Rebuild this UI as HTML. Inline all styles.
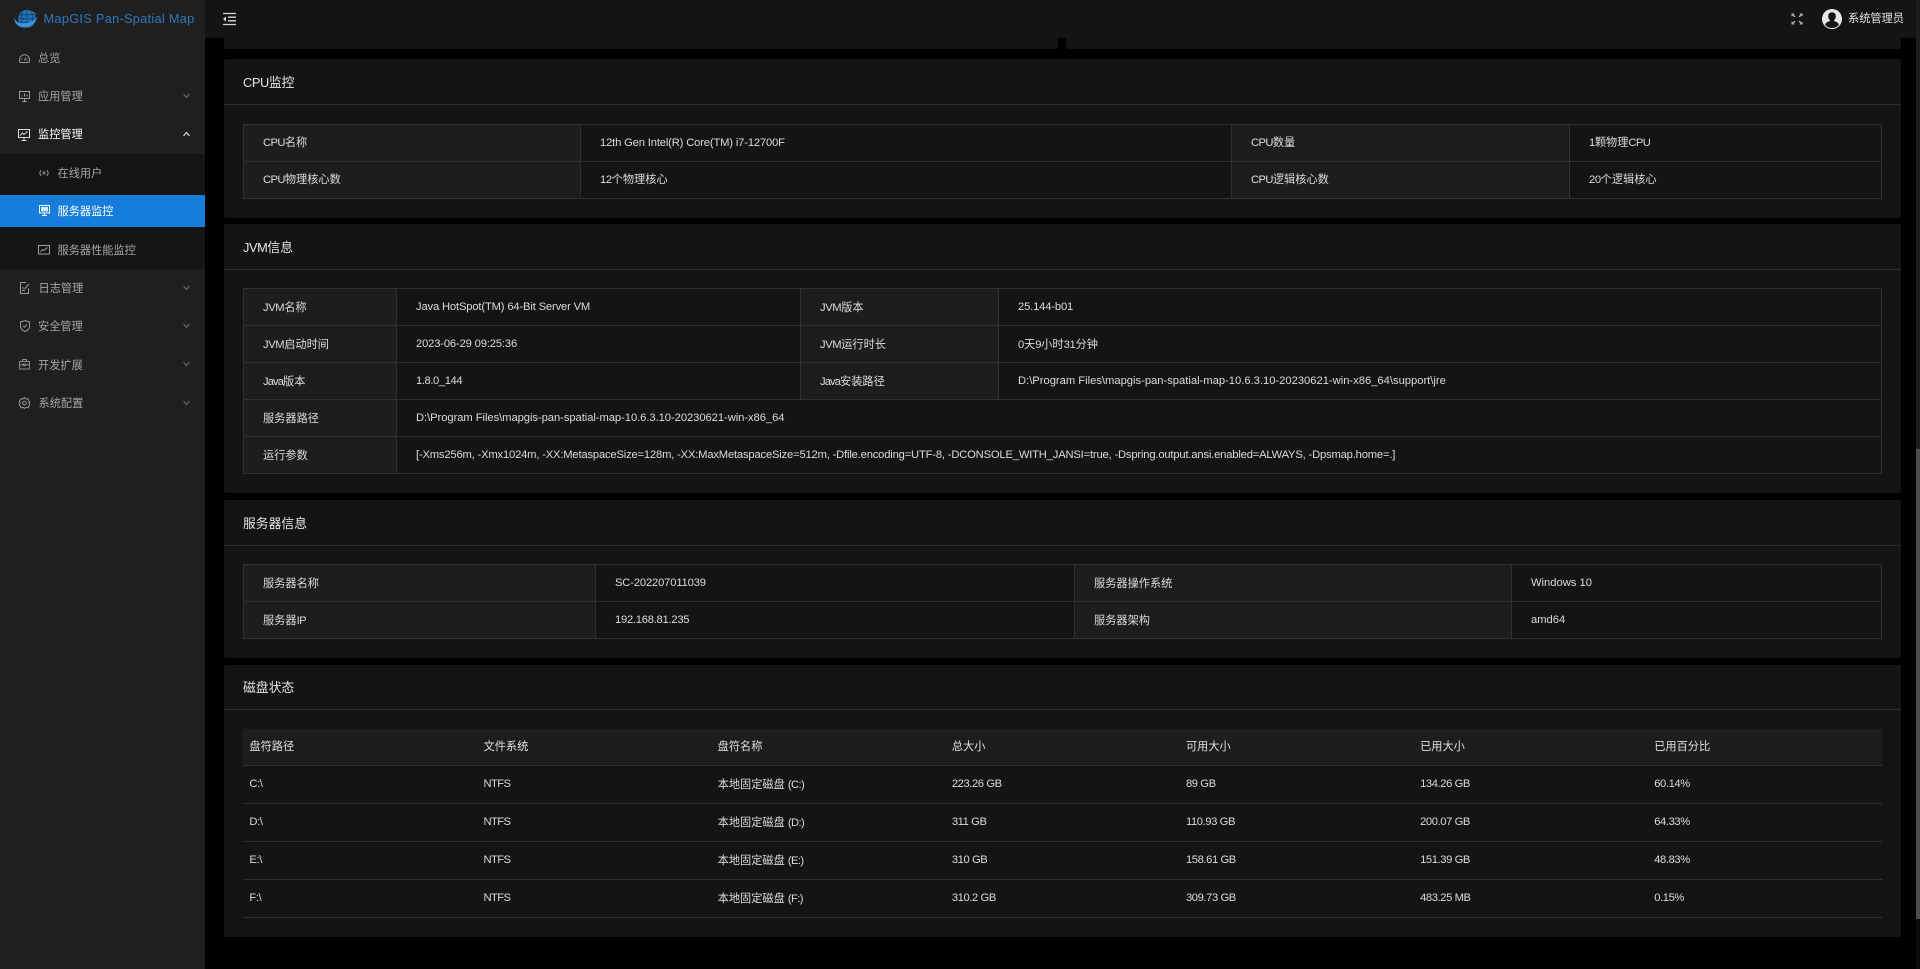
<!DOCTYPE html>
<html lang="zh-CN">
<head>
<meta charset="utf-8">
<title>MapGIS Pan-Spatial Map</title>
<style>
*{box-sizing:border-box}
html,body{margin:0;padding:0;width:1920px;height:969px;overflow:hidden;background:#000}
body{position:relative;font-family:"Liberation Sans","Noto Sans CJK SC",sans-serif;font-size:11.2px;color:#dcdcdc}
.side{position:absolute;left:0;top:0;width:205px;height:969px;background:#1f1f1f}
.sub{position:absolute;left:0;top:154px;width:205px;height:115px;background:#151515}
.act{position:absolute;left:0;top:195px;width:205px;height:32px;background:#177ddc}
.logo{position:absolute;left:43.500px;top:10px;font-size:12.8px;line-height:18px;color:#2f79bd;white-space:nowrap;letter-spacing:.27px}
.m{position:absolute;line-height:16px;white-space:nowrap;color:#a6a6a6;margin-top:1px}
.m.w{color:#fff}
.ic{position:absolute;display:block;overflow:visible}
.side .ic{margin-top:1px}
.side .ic.c,.side .ic.lg{margin-top:0}
.hd{position:absolute;left:205px;top:0;width:1711px;height:38px;background:#141414}
.user{position:absolute;left:1848px;top:11px;line-height:16px;color:#e4e4e4;white-space:nowrap}
.track{position:absolute;left:1916px;top:0;width:4px;height:969px;background:#0b0b0b}
.track i{position:absolute;left:0;top:0;width:4px;height:449px;background:#1c1c1c}
.track b{position:absolute;left:0;top:449px;width:4px;height:470px;background:#4d4d4d}
.card{position:absolute;left:224px;width:1677px;background:#141414;border-radius:2px}
.h{position:absolute;left:0;top:0;width:100%;border-bottom:1px solid #303030;padding-left:19px;font-size:12.8px;font-weight:400;color:#e6e6e6;margin:0;display:flex;align-items:center}
table{position:absolute;left:19px;border-collapse:collapse;table-layout:fixed;font-size:11.2px}
.d td,.d th{height:37px;border:1px solid #303030;padding:0 0 0 19px;font-weight:400;text-align:left;white-space:nowrap;color:#dcdcdc}
.d th{background:#1d1d1d}
.d .u{padding-bottom:2px}
.g th{height:36px;background:#1d1d1d;font-weight:400;text-align:left;padding:0 0 2px 6.4px;border-bottom:1px solid #303030;color:#e0e0e0}
.g td{height:38px;padding:0 0 0 6.4px;border-bottom:1px solid #303030;white-space:nowrap;color:#dcdcdc}
.a{letter-spacing:-.05px}.b{letter-spacing:-.15px}.e{letter-spacing:-.25px}.f{letter-spacing:-.4px}.j{letter-spacing:-.6px}.k{letter-spacing:-.9px}
</style>
</head>
<body>

<div class="card" style="top:38px;height:11px;width:834px"></div>
<div class="card" style="top:38px;height:11px;left:1066px;width:835px"></div>

<div class="card" style="top:59px;height:159px">
  <h3 class="h" style="height:46px"><span><span class="f">CPU</span>监控</span></h3>
  <table class="d" style="top:65px;width:1638px">
    <colgroup><col style="width:337px"><col style="width:651px"><col style="width:338px"><col style="width:312px"></colgroup>
    <tr><th class="u"><span class="j">CPU</span>名称</th><td class="b">12th Gen Intel(R) Core(TM) i7-12700F</td><th class="u"><span class="j">CPU</span>数量</th><td class="u"><span class="f">1</span>颗物理<span class="j">CPU</span></td></tr>
    <tr><th class="u"><span class="j">CPU</span>物理核心数</th><td class="u"><span class="f">12</span>个物理核心</td><th class="u"><span class="j">CPU</span>逻辑核心数</th><td class="u"><span class="f">20</span>个逻辑核心</td></tr>
  </table>
</div>

<div class="card" style="top:224px;height:269px">
  <h3 class="h" style="height:46px"><span><span class="f">JVM</span>信息</span></h3>
  <table class="d" style="top:64px;width:1638px">
    <colgroup><col style="width:153px"><col style="width:404px"><col style="width:198px"><col style="width:883px"></colgroup>
    <tr><th><span class="f">JVM</span>名称</th><td class="b">Java HotSpot(TM) 64-Bit Server VM</td><th><span class="f">JVM</span>版本</th><td class="b">25.144-b01</td></tr>
    <tr><th><span class="f">JVM</span>启动时间</th><td class="b">2023-06-29 09:25:36</td><th><span class="f">JVM</span>运行时长</th><td><span class="e">0</span>天<span class="e">9</span>小时<span class="e">31</span>分钟</td></tr>
    <tr><th><span class="k">Java</span>版本</th><td class="f">1.8.0_144</td><th><span class="k">Java</span>安装路径</th><td>D:\Program Files\mapgis-pan-spatial-map-10.6.3.10-20230621-win-x86_64\support\jre</td></tr>
    <tr><th>服务器路径</th><td colspan="3" class="a">D:\Program Files\mapgis-pan-spatial-map-10.6.3.10-20230621-win-x86_64</td></tr>
    <tr><th>运行参数</th><td colspan="3" style="letter-spacing:-.17px">[-Xms256m, -Xmx1024m, -XX:MetaspaceSize=128m, -XX:MaxMetaspaceSize=512m, -Dfile.encoding=UTF-8, -DCONSOLE_WITH_JANSI=true, -Dspring.output.ansi.enabled=ALWAYS, -Dpsmap.home=.]</td></tr>
  </table>
</div>

<div class="card" style="top:500px;height:158px">
  <h3 class="h" style="height:46px">服务器信息</h3>
  <table class="d" style="top:64px;width:1638px">
    <colgroup><col style="width:352px"><col style="width:479px"><col style="width:437px"><col style="width:370px"></colgroup>
    <tr><th>服务器名称</th><td class="b">SC-202207011039</td><th>服务器操作系统</th><td>Windows 10</td></tr>
    <tr><th>服务器<span class="j">IP</span></th><td class="e">192.168.81.235</td><th>服务器架构</th><td>amd64</td></tr>
  </table>
</div>

<div class="card" style="top:665px;height:272px">
  <h3 class="h" style="height:45px;padding-bottom:2px">磁盘状态</h3>
  <table class="g" style="top:64px;width:1639px">
    <colgroup><col span="7" style="width:234.14px"></colgroup>
    <tr><th>盘符路径</th><th>文件系统</th><th>盘符名称</th><th>总大小</th><th>可用大小</th><th>已用大小</th><th>已用百分比</th></tr>
    <tr><td class="f">C:\</td><td class="j">NTFS</td><td>本地固定磁盘 <span class="j">(C:)</span></td><td class="f">223.26 GB</td><td class="f">89 GB</td><td class="f">134.26 GB</td><td class="f">60.14%</td></tr>
    <tr><td class="f">D:\</td><td class="j">NTFS</td><td>本地固定磁盘 <span class="j">(D:)</span></td><td class="f">311 GB</td><td class="f">110.93 GB</td><td class="f">200.07 GB</td><td class="f">64.33%</td></tr>
    <tr><td class="f">E:\</td><td class="j">NTFS</td><td>本地固定磁盘 <span class="j">(E:)</span></td><td class="f">310 GB</td><td class="f">158.61 GB</td><td class="f">151.39 GB</td><td class="f">48.83%</td></tr>
    <tr><td class="f">F:\</td><td class="j">NTFS</td><td>本地固定磁盘 <span class="j">(F:)</span></td><td class="f">310.2 GB</td><td class="f">309.73 GB</td><td class="f">483.25 MB</td><td class="f">0.15%</td></tr>
  </table>
</div>

<div class="hd"></div>
<svg class="ic" style="left:222px;top:12px" width="15" height="14" viewBox="0 0 15 14">
  <path d="M1 1.5h13M6 5.2h8M6 8.8h8M1 12.5h13" stroke="#d8d8d8" stroke-width="1.3" fill="none"/>
  <path d="M4 4.5v5L1 7z" fill="#d8d8d8"/>
</svg>
<svg class="ic" style="left:1791px;top:13px" width="12" height="12" viewBox="0 0 12 12">
  <path d="M0.5 0.5h3L2.6 1.6 4.4 3.4 3.4 4.4 1.6 2.6 0.5 3.5zM11.5 0.5v3L10.4 2.6 8.6 4.4 7.6 3.4 9.4 1.6 8.5 0.5zM0.5 11.5v-3L1.6 9.4 3.4 7.6 4.4 8.6 2.6 10.4 3.5 11.5zM11.5 11.5h-3L9.4 10.4 7.6 8.6 8.6 7.6 10.4 9.4 11.5 8.5z" fill="#b4b4b4"/>
</svg>
<svg class="ic" style="left:1822px;top:9px" width="20" height="20" viewBox="0 0 20 20">
  <circle cx="10" cy="10" r="10" fill="#e6e6e6"/>
  <path d="M10 3.2c-2.4 0-3.8 1.8-3.8 4 0 1.6.7 3 1.7 3.8v1.1c-1.900.6-4.300 1.300-4.700 3.700C4.700 18 7.200 19 10 19s5.300-1 6.800-3.200c-.4-2.400-2.800-3.100-4.700-3.700V11c1-.8 1.700-2.200 1.700-3.800 0-2.200-1.400-4-3.800-4z" fill="#141414"/>
</svg>
<div class="user">系统管理员</div>

<div class="track"><i></i><b></b></div>

<aside class="side">
  <svg class="ic lg" style="left:14px;top:9px" width="25" height="21" viewBox="0 0 25 21">
    <circle cx="13" cy="9.800" r="8.800" fill="#2273ba"/>
    <path d="M5 9.800h16M13 1.200v17M8.500 3c-1.500 4.500-1.500 9 0 13.500M17.500 3c1.500 4.500 1.500 9 0 13.500M6 5.800h14M6 13.500h14" stroke="#123f69" stroke-width=".8" fill="none"/>
    <path d="M6.500 2.500C2.500 5 .5 8 1 10c.8 3 5.500 5 11.500 4 5.500-1 9-3.500 11.500-6.500-2.500 6-7 10.500-12.500 11C5.500 19 .8 15 .5 11 .3 7.500 3 4.500 6.500 2.500z" fill="#3d94dc"/>
    <path d="M17 2c3 .8 5 2.500 6 4.500-1-1-3-2.500-6-4.500z" fill="#3d94dc"/>
  </svg>
  <div class="logo">MapGIS Pan-Spatial Map</div>

  <div class="sub"></div>
  <div class="act"></div>

  <!-- 总览 -->
  <svg class="ic" style="left:19px;top:52px" width="11" height="11" viewBox="0 0 11 11" fill="none" stroke="#a0a0a0" stroke-width="1">
    <path d="M1 9.500C.3 8.500.2 7.500.5 6.300 1 3.500 3 1.800 5.500 1.800s4.500 1.700 5 4.500c.3 1.200.2 2.200-.5 3.200z"/><path d="M5.500 7.500 7 4.500M2.300 6h1M7.700 7h1" />
  </svg>
  <div class="m" style="left:38px;top:50px">总览</div>

  <!-- 应用管理 -->
  <svg class="ic" style="left:19px;top:90px" width="11" height="11" viewBox="0 0 11 11" fill="none" stroke="#a0a0a0" stroke-width="1">
    <rect x=".5" y=".5" width="10" height="7"/><path d="M3 10.500h5M5.500 7.500v3M3 5.500v-1M5.500 5.500v-3M8 5.500v-2"/>
  </svg>
  <div class="m" style="left:38px;top:88px">应用管理</div>
  <svg class="ic c" style="left:183px;top:93px" width="7" height="6" viewBox="0 0 7 6"><path d="M.5 1 3.500 4.500 6.500 1" fill="none" stroke="#666" stroke-width="1.200"/></svg>

  <!-- 监控管理 -->
  <svg class="ic" style="left:18px;top:128px" width="12" height="12" viewBox="0 0 12 12" fill="none" stroke="#dcdcdc" stroke-width="1">
    <rect x=".5" y=".5" width="11" height="8"/><path d="M2 6.500 4.500 4l1.500 1.500L9.500 2.500M3.500 11.500h5M6 8.500v3"/>
  </svg>
  <div class="m w" style="left:38px;top:126px">监控管理</div>
  <svg class="ic c" style="left:183px;top:131px" width="7" height="6" viewBox="0 0 7 6"><path d="M.5 5 3.500 1.500 6.500 5" fill="none" stroke="#e0e0e0" stroke-width="1.200"/></svg>

  <!-- 在线用户 -->
  <svg class="ic" style="left:39px;top:168px" width="10" height="8" viewBox="0 0 10 8" fill="none" stroke="#8c8c8c" stroke-width="1">
    <path d="M2 1 .7 4 2 7M8 1l1.300 3L8 7"/><path d="M3.700 2.500 6.300 5.500M6.300 2.500 3.700 5.500"/>
  </svg>
  <div class="m" style="left:57.500px;top:165px">在线用户</div>

  <!-- 服务器监控 -->
  <svg class="ic" style="left:38.500px;top:204px" width="11" height="11" viewBox="0 0 11 11">
    <rect x=".5" y=".5" width="10" height="7.500" fill="none" stroke="#fff"/><rect x="2" y="2" width="7" height="4.500" fill="#d5e8f8"/><path d="M3 10.500h5M5.500 8v2.500" stroke="#fff" fill="none"/>
  </svg>
  <div class="m w" style="left:57.500px;top:203px">服务器监控</div>

  <!-- 服务器性能监控 -->
  <svg class="ic" style="left:38px;top:244px" width="12" height="10" viewBox="0 0 12 10" fill="none" stroke="#a0a0a0" stroke-width="1">
    <rect x=".5" y=".5" width="11" height="8.500"/><path d="M2.500 7 4.500 4.500 6 5.500 9.500 2.500"/>
  </svg>
  <div class="m" style="left:57.500px;top:241.500px">服务器性能监控</div>

  <!-- 日志管理 -->
  <svg class="ic" style="left:20px;top:281px" width="10" height="12" viewBox="0 0 10 12" fill="none" stroke="#9a9a9a" stroke-width="1">
    <path d="M8.500 6.500v5h-8V.5h5.500M2 8.500h3M2 6h2"/><path d="M4.500 7 9 1.800"/>
  </svg>
  <div class="m" style="left:38.500px;top:280px">日志管理</div>
  <svg class="ic c" style="left:183px;top:285px" width="7" height="6" viewBox="0 0 7 6"><path d="M.5 1 3.500 4.500 6.500 1" fill="none" stroke="#666" stroke-width="1.200"/></svg>

  <!-- 安全管理 -->
  <svg class="ic" style="left:20px;top:319px" width="10" height="12" viewBox="0 0 10 12" fill="none" stroke="#9a9a9a" stroke-width="1">
    <path d="M5 .6 9.500 2v4.500c0 2.500-2 4-4.500 5-2.500-1-4.500-2.500-4.500-5V2z"/><path d="M3 5.800 4.500 7.200 7 4.500"/>
  </svg>
  <div class="m" style="left:38px;top:318px">安全管理</div>
  <svg class="ic c" style="left:183px;top:323px" width="7" height="6" viewBox="0 0 7 6"><path d="M.5 1 3.500 4.500 6.500 1" fill="none" stroke="#666" stroke-width="1.200"/></svg>

  <!-- 开发扩展 -->
  <svg class="ic" style="left:19px;top:358px" width="11" height="11" viewBox="0 0 11 11" fill="none" stroke="#8c8c8c" stroke-width="1">
    <rect x=".5" y="2.500" width="10" height="7.500"/><path d="M3.500 2.500v-2h4v2M.5 5.800h3.500M7 5.800h3.500"/><rect x="4.300" y="5" width="2.400" height="1.600"/>
  </svg>
  <div class="m" style="left:38px;top:356.500px">开发扩展</div>
  <svg class="ic c" style="left:183px;top:361px" width="7" height="6" viewBox="0 0 7 6"><path d="M.5 1 3.500 4.500 6.500 1" fill="none" stroke="#666" stroke-width="1.200"/></svg>

  <!-- 系统配置 -->
  <svg class="ic" style="left:19px;top:396px" width="11" height="12" viewBox="0 0 11 12" fill="none" stroke="#9a9a9a" stroke-width="1">
    <path d="M5.500.6 7 2l2-.2.800 1.800 1 1.600L9.700 6l1.100 1.400-1 1.700L9 10.800 7 10.300 5.500 11.400 4 10.300l-2 .5-.8-1.700-1-1.700L1.300 6 .2 4.600l1-1.600L2 1.800 4 2z"/><circle cx="5.500" cy="6" r="1.800"/>
  </svg>
  <div class="m" style="left:38.500px;top:395px">系统配置</div>
  <svg class="ic c" style="left:183px;top:400px" width="7" height="6" viewBox="0 0 7 6"><path d="M.5 1 3.500 4.500 6.500 1" fill="none" stroke="#666" stroke-width="1.200"/></svg>
</aside>

</body>
</html>
